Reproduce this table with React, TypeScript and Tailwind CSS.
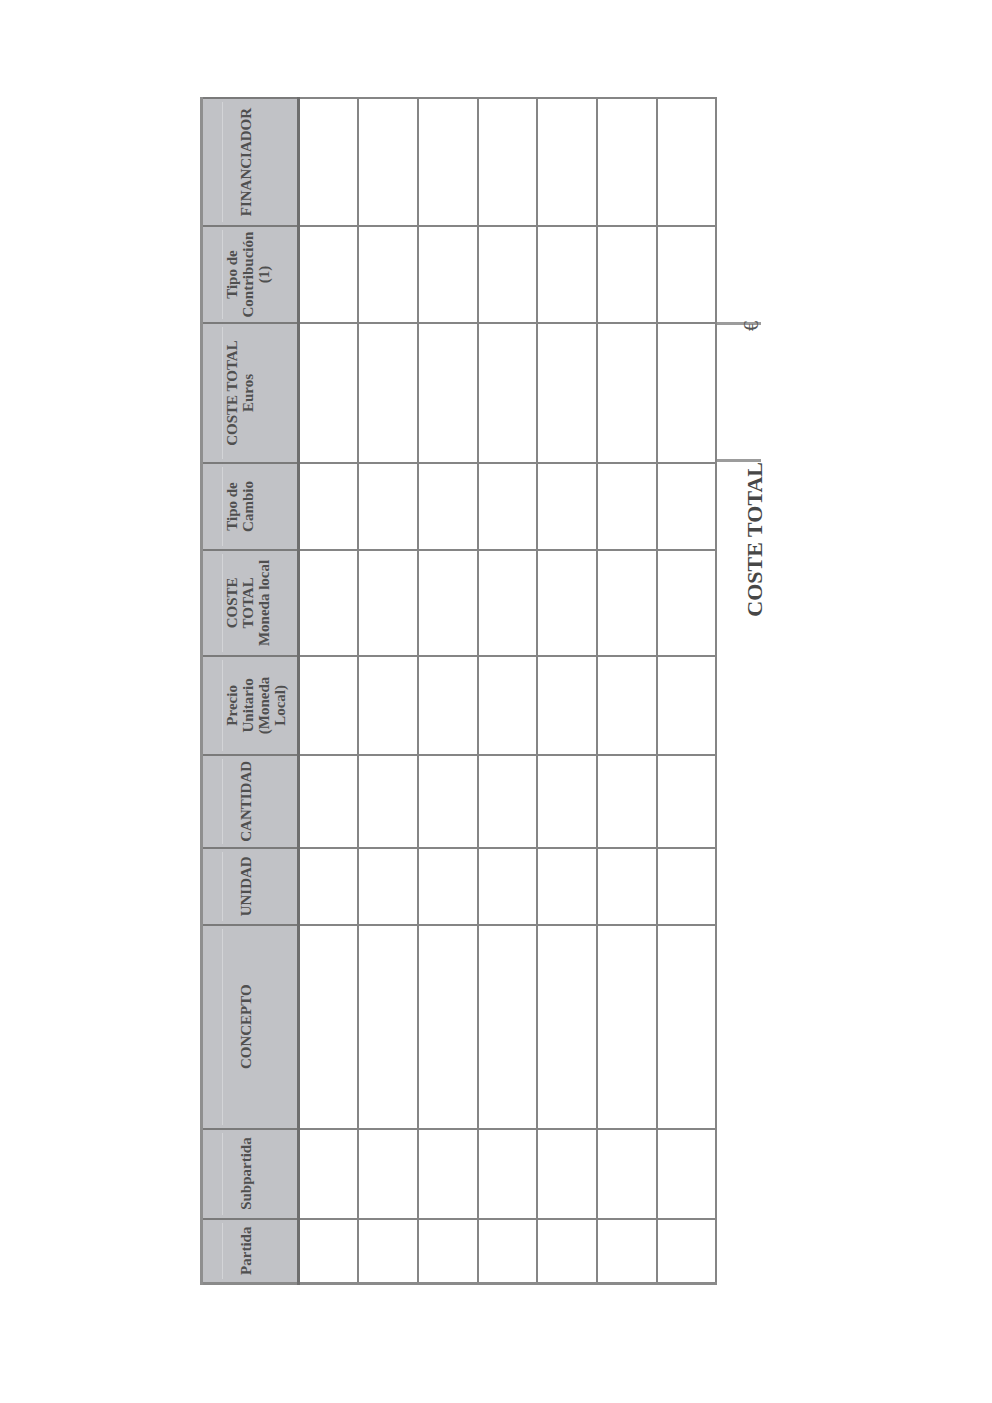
import React from 'react'

const columns = [
  { w: 'w-[65px]', label: ['Partida'] },
  { w: 'w-[90px]', label: ['Subpartida'] },
  { w: 'w-[204px]', label: ['CONCEPTO'] },
  { w: 'w-[77px]', label: ['UNIDAD'] },
  { w: 'w-[93px]', label: ['CANTIDAD'] },
  { w: 'w-[99px]', label: ['Precio', 'Unitario', '(Moneda', 'Local)'] },
  { w: 'w-[106px]', label: ['COSTE', 'TOTAL', 'Moneda local'] },
  { w: 'w-[87px]', label: ['Tipo de', 'Cambio'] },
  { w: 'w-[140px]', label: ['COSTE TOTAL', 'Euros'] },
  { w: 'w-[97px]', label: ['Tipo de', 'Contribución', '(1)'] },
  { w: 'w-[128px]', label: ['FINANCIADOR'] },
]

const rows = [0, 1, 2, 3, 4, 5, 6]

export default function App() {
  return (
    <div className="w-[992px] h-[1403px] bg-white pl-[200px] pt-[97px] font-['Liberation_Serif',serif]">
      {/* portrait box; the sheet inside is laid out landscape and turned */}
      <div className="w-[570px] h-[1188px]">
        <div className="w-[1188px] h-[570px] origin-top-left [transform:translateY(1188px)_rotate(-90deg)]">
          <table className="table-fixed border-collapse border-l-[3px] border-t-[3px] border-b-2 border-r-2 border-l-[#8a8a8a] border-t-[#8f8f8f] border-b-[#9a9a9a] border-r-[#777]">
            <thead>
              <tr className="h-[97px]">
                {columns.map((col, i) => (
                  <th
                    key={i}
                    className={`${col.w} p-0 pt-[19px] align-top bg-[#c1c2c6] border-2 border-[#7a7a7a] border-b-[3px] border-b-[#6e6e6e]`}
                  >
                    <div
                      className={`h-[59px] mx-[3px] border-t border-[#d3d4d7] flex justify-center ${
                        col.label.length > 1 ? 'items-start' : 'items-center'
                      }`}
                    >
                      <div
                        className={`text-[15px] font-bold text-[#4f4f4f] text-center whitespace-nowrap ${
                          col.label.length > 1 ? 'leading-[16px] pt-[1px]' : 'leading-[17px] -mt-[12px]'
                        }`}
                      >
                        {col.label.map((line, j) => (
                          <div key={j}>{line}</div>
                        ))}
                      </div>
                    </div>
                  </th>
                ))}
              </tr>
            </thead>
            <tbody>
              {rows.map((r) => (
                <tr key={r} className="h-[59.7px]">
                  {columns.map((col, i) => (
                    <td key={i} className="p-0 bg-white border-2 border-[#858585]" />
                  ))}
                </tr>
              ))}
            </tbody>
          </table>

          {/* total line under the table */}
          <div className="flex h-[44px]">
            <div className="w-[823px] flex items-end justify-end">
              <span className="text-[22px] leading-[18px] font-bold text-[#474747] translate-y-[3px]">
                COSTE TOTAL
              </span>
            </div>
            <div className="w-[140px] border-l-[3px] border-r-[3px] border-[#9c9c9c] flex items-end justify-end">
              <span className="text-[20px] leading-[20px] text-[#555] translate-x-[4px]">€</span>
            </div>
          </div>
        </div>
      </div>
    </div>
  )
}
